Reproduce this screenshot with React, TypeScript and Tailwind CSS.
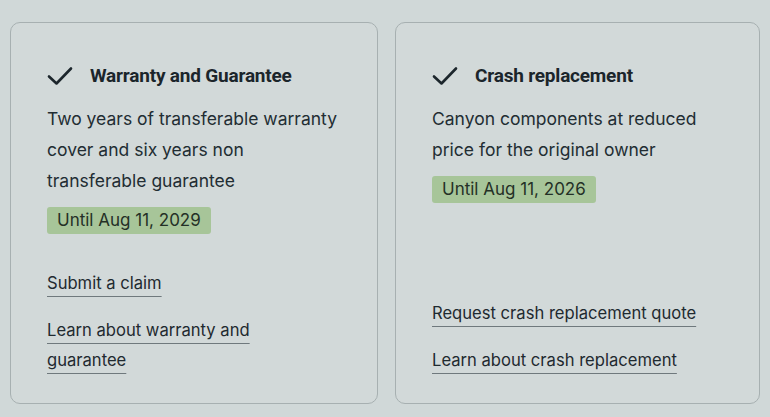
import React from "react";

function Check() {
  return (
    <svg width="26" height="20" viewBox="0 0 26 20" fill="none" className="shrink-0">
      <path d="M2 10.5 L9.5 17.5 L24 2.5" stroke="#1c262c" strokeWidth="2.6" strokeLinecap="round" strokeLinejoin="round" />
    </svg>
  );
}

function Card({
  title,
  lines,
  badge,
  links,
  className,
}: {
  title: string;
  lines: string[];
  badge: string;
  links: string[][];
  className?: string;
}) {
  return (
    <div className={"flex flex-col rounded-[10px] border border-[#a7b0b1] bg-[#d2d9d9] pl-[36px] pr-[16px] pt-[41px] pb-[28px] " + (className ?? "")}>
      <div className="flex items-center gap-[17px] h-[24px]">
        <Check />
        <div className="text-[19px] font-bold tracking-[-0.2px] text-[#1b252b]" style={{ fontFamily: "Roboto, sans-serif" }}>{title}</div>
      </div>
      <div className="mt-[15px] text-[17.5px] leading-[31px] text-[#222d33]">
        {lines.map((l, i) => (
          <div key={i}>{l}</div>
        ))}
      </div>
      <div className="mt-[11px] self-start rounded-[3px] bg-[#a7c599] px-[10px] text-[17px] leading-[27px] text-[#243026]">
        {badge}
      </div>
      <div className="mt-auto flex flex-col gap-[17px]">
        {links.map((l, i) => (
          <div key={i} className="text-[16.6px] leading-[30px] text-[#1f2a30]">
            {l.map((s, j) => (
              <div key={j}>
                <span className="underline decoration-[#6f797d] decoration-1 underline-offset-[7px]">{s}</span>
              </div>
            ))}
          </div>
        ))}
      </div>
    </div>
  );
}

export default function App() {
  return (
    <div
      className="w-[770px] h-[417px] bg-[#d0d8d8] flex gap-[17px] pl-[10px] pr-[10px] pt-[22px] pb-[13px] overflow-hidden"
      style={{ fontFamily: "Inter, 'Noto Sans', sans-serif" }}
    >
      <Card
        className="w-[368px]"
        title="Warranty and Guarantee"
        lines={["Two years of transferable warranty", "cover and six years non", "transferable guarantee"]}
        badge="Until Aug 11, 2029"
        links={[["Submit a claim"], ["Learn about warranty and", "guarantee"]]}
      />
      <Card
        className="w-[365px]"
        title="Crash replacement"
        lines={["Canyon components at reduced", "price for the original owner"]}
        badge="Until Aug 11, 2026"
        links={[["Request crash replacement quote"], ["Learn about crash replacement"]]}
      />
    </div>
  );
}
